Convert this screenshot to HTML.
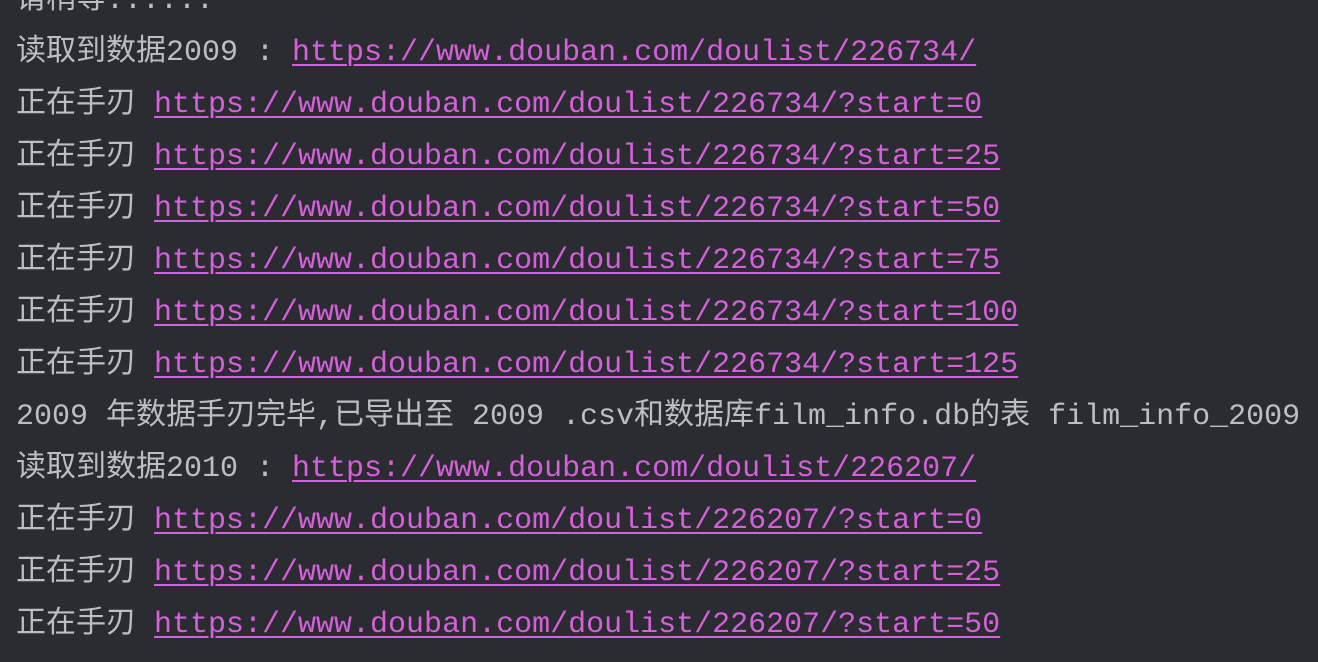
<!DOCTYPE html>
<html><head><meta charset="utf-8"><style>
html,body{margin:0;padding:0;width:1318px;height:662px;overflow:hidden;background:#2a2c32;}
.c{position:absolute;left:16px;top:-25px;font-family:"Liberation Mono","Noto Sans CJK SC",monospace;font-size:30px;line-height:52px;color:#bcbec4;white-space:pre;}
a{color:#d65fdc;text-decoration:underline;text-underline-offset:4px;text-decoration-thickness:2px;}
</style></head><body><div class="c"><div>请稍等......</div><div>读取到数据2009 : <a>https://www.douban.com/doulist/226734/</a></div><div>正在手刃 <a>https://www.douban.com/doulist/226734/?start=0</a></div><div>正在手刃 <a>https://www.douban.com/doulist/226734/?start=25</a></div><div>正在手刃 <a>https://www.douban.com/doulist/226734/?start=50</a></div><div>正在手刃 <a>https://www.douban.com/doulist/226734/?start=75</a></div><div>正在手刃 <a>https://www.douban.com/doulist/226734/?start=100</a></div><div>正在手刃 <a>https://www.douban.com/doulist/226734/?start=125</a></div><div>2009 年数据手刃完毕,已导出至 2009 .csv和数据库film_info.db的表 film_info_2009</div><div>读取到数据2010 : <a>https://www.douban.com/doulist/226207/</a></div><div>正在手刃 <a>https://www.douban.com/doulist/226207/?start=0</a></div><div>正在手刃 <a>https://www.douban.com/doulist/226207/?start=25</a></div><div>正在手刃 <a>https://www.douban.com/doulist/226207/?start=50</a></div></div></body></html>
